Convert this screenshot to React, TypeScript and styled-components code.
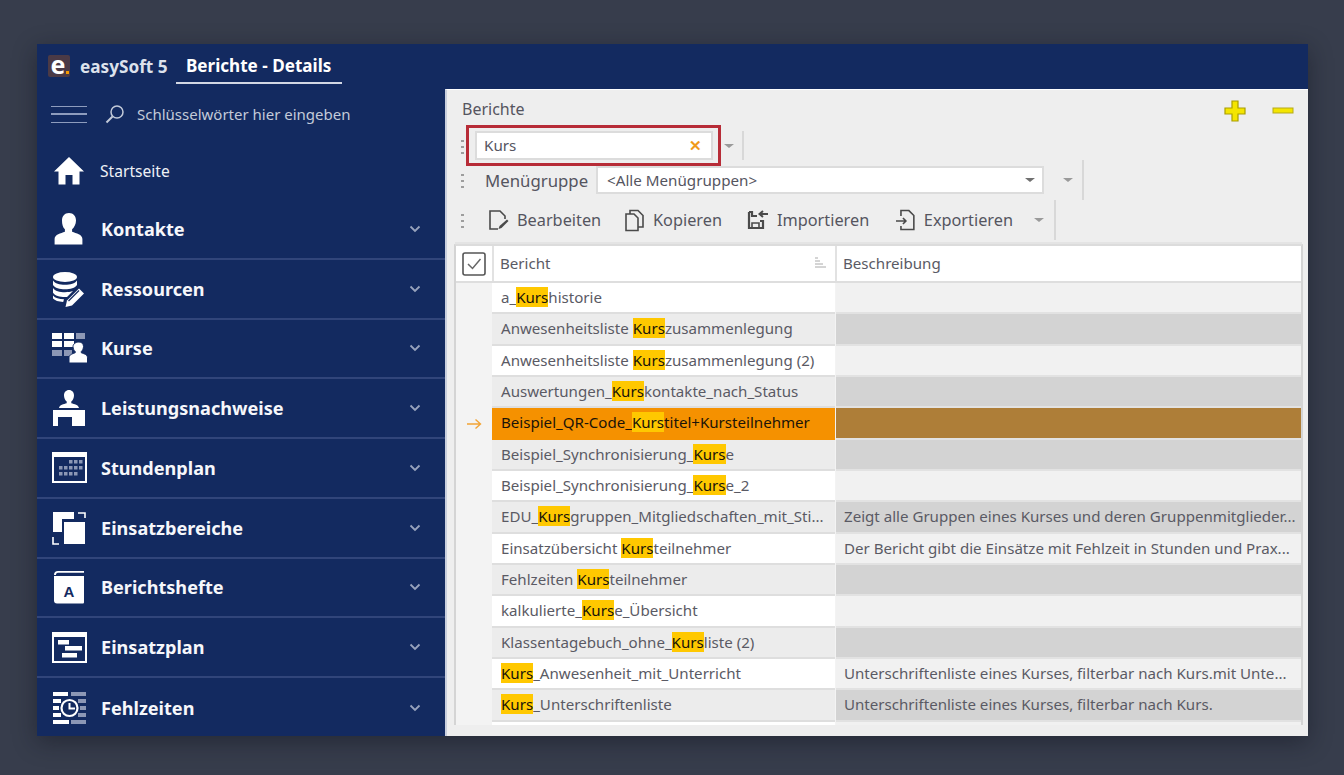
import React from 'react';
import styled, { createGlobalStyle } from 'styled-components';

const GlobalStyle = createGlobalStyle`
  html, body {
    margin: 0;
    height: 775px;
    overflow: hidden;
    background: #373d4c;
    font-family: 'Noto Sans', 'Open Sans', Arial, sans-serif;
  }
  * { box-sizing: border-box; }
`;

const Page = styled.div`
  padding: 44px 36px 0 37px;
`;

const AppWindow = styled.div`
  width: 1271px;
  height: 692px;
  display: flex;
  flex-direction: column;
  background: #132a60;
  box-shadow: 0 6px 22px rgba(15, 18, 28, 0.45);
  overflow: hidden;
`;

const TitleBar = styled.header`
  height: 45px;
  flex: none;
  display: flex;
  align-items: center;
  padding-left: 11px;
`;

const Logo = styled.div`
  width: 22px;
  height: 22px;
  margin-top: -1px;
  border-radius: 2px;
  background: #4b3a46;
  color: #fff;
  font-size: 25px;
  font-weight: 700;
  line-height: 18px;
  text-align: center;
  padding-right: 2px;
  position: relative;
`;

const LogoDot = styled.span`
  position: absolute;
  right: 1px;
  bottom: 3px;
  width: 3px;
  height: 3px;
  background: #f59a00;
`;

const AppName = styled.span`
  margin-left: 10px;
  font-size: 17.2px;
  font-weight: 700;
  color: #dde2ec;
`;

const TabTitle = styled.div`
  align-self: flex-start;
  margin: 4px 0 0 8px;
  width: 166px;
  height: 36px;
  padding-top: 6px;
  border-bottom: 2px solid #d2d7e4;
  text-align: center;
  font-size: 17.1px;
  font-weight: 700;
  color: #fff;
`;

const Body = styled.div`
  flex: 1;
  min-height: 0;
  display: flex;
`;

const Sidebar = styled.nav`
  width: 408px;
  flex: none;
  display: flex;
  flex-direction: column;
`;

const SearchRow = styled.div`
  height: 52px;
  flex: none;
  display: flex;
  align-items: center;
  padding: 0 0 2px 14px;
`;

const Burger = styled.div`
  width: 36px;
  height: 17px;
  border-top: 1.5px solid #8e9cbd;
  border-bottom: 1.5px solid #8e9cbd;
  position: relative;

  &::after {
    content: '';
    position: absolute;
    left: 0;
    right: 0;
    top: 6.5px;
    height: 1.5px;
    background: #8e9cbd;
  }
`;

const SearchHint = styled.span`
  margin-left: 12px;
  font-size: 15px;
  color: #c3cad9;
`;

const HomeRow = styled.a`
  height: 59px;
  flex: none;
  display: flex;
  align-items: center;
  padding: 0 0 0 13px;
  font-size: 15.6px;
  color: #eef1f6;
`;

const NavItem = styled.a`
  height: 59.75px;
  flex: none;
  display: flex;
  align-items: center;
  padding: 0 24px 0 13px;
  border-bottom: 2px solid #31457a;
  font-size: 18.1px;
  font-weight: 700;
  color: #f6f7fb;

  &:last-child {
    border-bottom: 0;
  }
`;

const IconBox = styled.span`
  width: 38px;
  height: 38px;
  flex: none;
  display: flex;
  align-items: center;
  justify-content: center;
  margin-right: 13px;
`;

const HomeIconBox = styled(IconBox)`
  margin-right: 12px;
`;

const NavLabel = styled.span`
  flex: 1;
`;

const Content = styled.main`
  flex: 1;
  min-width: 0;
  display: flex;
  flex-direction: column;
  background: #eeeeee;
  border-left: 2px solid #c9cfdd;
  border-top: 1px solid #fff;
  padding-bottom: 11px;
`;

const TitleRow = styled.div`
  height: 41px;
  flex: none;
  display: flex;
  justify-content: space-between;
  padding: 8px 14px 0 15px;
  font-size: 16px;
  color: #55555f;
`;

const ZoomIcons = styled.div`
  display: flex;
  gap: 26px;
  margin-top: 2px;
`;

const ToolRow = styled.div<{ $height: number }>`
  height: ${(p) => p.$height}px;
  flex: none;
  display: flex;
  align-items: center;
  padding-left: 14px;
  font-size: 16.3px;
  color: #55555f;
`;

const Grip = styled.span`
  width: 3px;
  height: 16px;
  flex: none;
  background: radial-gradient(circle, #9d9d9d 1.2px, transparent 1.4px) 0 0 / 3px 6px;
`;

const FilterBox = styled.div`
  position: relative;
  width: 238px;
  height: 29px;
  margin-left: 11px;
  display: flex;
  align-items: center;
  justify-content: space-between;
  padding: 0 9px 1px 7px;
  background: #fff;
  border: 2px solid #dcdcdc;
  font-size: 15.2px;

  &::after {
    content: '';
    position: absolute;
    inset: -8px -10px -8px -11px;
    border: 3px solid #b72c37;
    pointer-events: none;
  }
`;

const ClearMark = styled.span`
  color: #f09a1a;
  font-size: 15px;
  font-weight: 700;
  line-height: 1;
`;

const Caret = styled.span<{ $left: number }>`
  width: 0;
  height: 0;
  flex: none;
  margin-left: ${(p) => p.$left}px;
  border-left: 5px solid transparent;
  border-right: 5px solid transparent;
  border-top: 4px solid #9a9a9a;
`;

const ToolSep = styled.span<{ $left: number; $height: number }>`
  width: 2px;
  height: ${(p) => p.$height}px;
  flex: none;
  margin-left: ${(p) => p.$left}px;
  background: #d8d8d8;
`;

const GroupLabel = styled.span`
  margin-left: 21px;
  width: 111px;
  flex: none;
  font-size: 16.8px;
`;

const GroupSelect = styled.div`
  width: 448px;
  height: 28px;
  flex: none;
  display: flex;
  align-items: center;
  justify-content: space-between;
  padding: 0 7px 1px 9px;
  background: #fff;
  border: 2px solid #dcdcdc;
  font-size: 15.2px;
`;

const DarkCaret = styled.span`
  width: 0;
  height: 0;
  border-left: 5px solid transparent;
  border-right: 5px solid transparent;
  border-top: 4px solid #707070;
`;

const ActionButton = styled.button<{ $width: number }>`
  width: ${(p) => p.$width}px;
  flex: none;
  display: flex;
  align-items: center;
  gap: 8px;
  padding: 0;
  border: 0;
  background: none;
  font: inherit;
  color: inherit;
`;

const Actions = styled.div`
  display: flex;
  align-items: center;
  margin-left: 24px;
`;

const Table = styled.div`
  flex: 1;
  min-height: 0;
  margin: 4px 5px 0 7px;
  border-top: 2px solid #dcdcdc;
  box-shadow: 0 -3px 0 -1px #e4e4e4;
  border-left: 2px solid #d4d4d4;
  border-right: 2px solid #d4d4d4;
  overflow: hidden;
  background: #f3f3f3;
  font-size: 15.1px;
  color: #5a5a64;
`;

const HeadRow = styled.div`
  display: grid;
  grid-template-columns: 36px 343px 1fr;
  height: 37px;
  background: #fff;
  border-bottom: 2px solid #dedede;
`;

const HeadCell = styled.div`
  display: flex;
  align-items: center;
  justify-content: space-between;
  padding: 0 9px 2px 6px;
  border-left: 2px solid #e2e2e2;
`;

const CheckCell = styled.div`
  display: flex;
  align-items: center;
  justify-content: center;
`;

const Row = styled.div`
  display: grid;
  grid-template-columns: 36px 343px 1fr;
  height: 31.33px;
`;

const Marker = styled.div`
  display: flex;
  align-items: center;
  justify-content: center;
  color: #f2a436;
`;

type Tone = 'white' | 'gray' | 'active';

const nameBg: Record<Tone, string> = { white: '#ffffff', gray: '#ececec', active: '#f59100' };
const descBg: Record<Tone, string> = { white: '#f1f1f1', gray: '#d3d3d3', active: '#ae7e38' };

const NameCell = styled.div<{ $tone: Tone }>`
  display: flex;
  align-items: center;
  padding: 0 8px 1px 9px;
  background: ${(p) => nameBg[p.$tone]};
  color: ${(p) => (p.$tone === 'active' ? '#1b1408' : 'inherit')};
  border-bottom: 2px solid ${(p) => (p.$tone === 'active' ? '#f59100' : '#dedede')};
  white-space: pre;
  overflow: hidden;
`;

const DescCell = styled.div<{ $tone: Tone }>`
  display: flex;
  align-items: center;
  padding: 0 8px 1px;
  margin-left: 1px;
  background: ${(p) => descBg[p.$tone]};
  border-bottom: 2px solid #e2e2e2;
  white-space: nowrap;
  overflow: hidden;
`;

const Hit = styled.span`
  background: #ffc800;
  color: #17130a;
  line-height: 20px;
`;

const Chevron = () => (
  <svg width="12" height="8" viewBox="0 0 12 8">
    <path d="M1.5 1.5 6 6l4.5-4.5" fill="none" stroke="#98a3bd" strokeWidth="1.8" />
  </svg>
);

const icons: Record<string, React.ReactNode> = {
  home: (
    <svg width="32" height="30" viewBox="0 0 32 30" fill="#fff">
      <path d="M16 1 31 15.5h-4.500V28.500h-7V19h-7v9.500h-7V15.500H1z" />
    </svg>
  ),
  kontakte: (
    <svg width="30" height="34" viewBox="0 0 30 34" fill="#fff">
      <path d="M15 1c4.500 0 7 3.300 7 7.500 0 3.600-1.800 7-3.900 8.800v2.400c4 1.500 10.300 2.700 10.300 7.300v5.500H.6v-5.500c0-4.600 6.300-5.800 10.300-7.300v-2.400C8.800 15.500 8 12.100 8 8.500 8 4.300 10.500 1 15 1z" />
    </svg>
  ),
  ressourcen: (
    <svg width="34" height="36" viewBox="0 0 34 36" fill="#fff">
      <ellipse cx="13" cy="6" rx="12" ry="5" />
      <path d="M1 9.500c2 3 6.500 4.200 12 4.200s10-1.200 12-4.200V14c-2 3-6.500 4.200-12 4.200S3 17 1 14z" />
      <path d="M1 17c2 3 6.500 4.200 12 4.200 3 0 5.800-.4 8-1.200l-6 6c-.6.100-1.300.1-2 .1-5.500 0-10-1.500-12-4.400z" />
      <path d="M1 24.500c2 2.500 6 3.700 11 3.800L11.200 31C6.500 30.700 2.800 29.500 1 27.500z" />
      <path d="M27 17.500l5 5L20 34.500l-6.500 1.500 1.500-6.500z" />
      <path d="M27 19.500 16.500 30" stroke="#132a60" strokeWidth="1.2" />
    </svg>
  ),
  kurse: (
    <svg width="37" height="32" viewBox="0 0 37 32">
      <g fill="#fff">
        <rect x="1" y="1" width="10" height="6" />
        <rect x="13" y="1" width="10" height="6" />
        <rect x="1" y="9" width="10" height="6" />
        <rect x="13" y="9" width="10" height="6" />
      </g>
      <g fill="#8c97b5">
        <rect x="25" y="1" width="9" height="6" />
        <rect x="1" y="18" width="10" height="6" />
        <rect x="13" y="18" width="8" height="6" />
      </g>
      <path d="M28 10c2.800 0 4.500 2 4.500 4.500 0 2-1 4-2.200 5v1.300c2.500 1 6.200 1.600 6.200 5V31H18v-5.200c0-3.400 3.700-4 6.200-5v-1.300c-1.300-1-2.200-3-2.200-5C22 12 24.800 10 28 10z" fill="#fff" stroke="#132a60" />
    </svg>
  ),
  leistung: (
    <svg width="34" height="38" viewBox="0 0 34 38" fill="#fff">
      <path d="M17 1c3 0 5 2.300 5 5.500 0 2.500-1.200 4.800-2.700 6v1.700c3 1 7.200 1.400 7.700 4.800H7c.5-3.400 4.700-3.800 7.700-4.800v-1.700C13.200 11.300 12 9 12 6.500 12 3.300 14 1 17 1z" />
      <path d="M1 21h32v16H20v-9H6v9H1z" />
    </svg>
  ),
  stundenplan: (
    <svg width="35" height="31" viewBox="0 0 35 31">
      <rect x="1" y="1" width="33" height="29" fill="none" stroke="#fff" strokeWidth="2" />
      <rect x="1" y="1" width="33" height="4" fill="#fff" />
      <g fill="#8c97b5">
        {[
          [17, 8], [22, 8], [27, 8],
          [7, 14], [12, 14], [17, 14], [22, 14], [27, 14],
          [7, 20], [12, 20], [17, 20], [22, 20]
        ].map(([x, y]) => (
          <rect key={`${x}-${y}`} x={x} y={y} width="3.500" height="3.500" />
        ))}
      </g>
    </svg>
  ),
  bereiche: (
    <svg width="34" height="34" viewBox="0 0 34 34" fill="#fff">
      <path d="M1 1h21v7H10v13H1z" />
      <rect x="12" y="11" width="21" height="22" />
      <path d="M26 2h7v5M1 26v7h6" fill="none" stroke="#fff" strokeWidth="1.600" />
    </svg>
  ),
  hefte: (
    <svg width="32" height="34" viewBox="0 0 32 34">
      <path d="M1 5c0-2.500 1.500-4 4-4h26v1.800H5C3.500 2.800 3 3.800 3 5" fill="#fff" />
      <path d="M1 6h30v26c0 1-.5 1.500-1.500 1.500H4c-2 0-3-1-3-3z" fill="#fff" />
      <text x="16" y="27" textAnchor="middle" fontFamily="Liberation Sans, Arial, sans-serif" fontWeight="700" fontSize="15" fill="#132a60">A</text>
    </svg>
  ),
  plan: (
    <svg width="35" height="31" viewBox="0 0 35 31">
      <rect x="1" y="1" width="33" height="29" fill="none" stroke="#fff" strokeWidth="2" />
      <rect x="1" y="1" width="33" height="4" fill="#fff" />
      <rect x="6" y="8" width="11" height="4.500" fill="#fff" />
      <rect x="13" y="14" width="17" height="4.500" fill="#fff" />
      <rect x="10" y="21" width="15" height="4.500" fill="#fff" />
    </svg>
  ),
  fehlzeiten: (
    <svg width="35" height="34" viewBox="0 0 35 34">
      <g fill="#fff">
        <rect x="1" y="1" width="15" height="4" />
        <rect x="1" y="8" width="8" height="4" />
        <rect x="1" y="15" width="6" height="4" />
        <rect x="1" y="22" width="8" height="4" />
        <rect x="1" y="29" width="16" height="4" />
      </g>
      <g fill="#8c97b5">
        <rect x="19" y="1" width="15" height="4" />
        <rect x="26" y="8" width="8" height="4" />
        <rect x="28" y="15" width="6" height="4" />
        <rect x="26" y="22" width="8" height="4" />
        <rect x="19" y="29" width="15" height="4" />
      </g>
      <circle cx="17.500" cy="17" r="8" fill="none" stroke="#fff" strokeWidth="2.200" />
      <path d="M17.500 12v5.500H23" fill="none" stroke="#fff" strokeWidth="2" />
    </svg>
  )
};

const navItems = [
  ['Kontakte', 'kontakte'],
  ['Ressourcen', 'ressourcen'],
  ['Kurse', 'kurse'],
  ['Leistungsnachweise', 'leistung'],
  ['Stundenplan', 'stundenplan'],
  ['Einsatzbereiche', 'bereiche'],
  ['Berichtshefte', 'hefte'],
  ['Einsatzplan', 'plan'],
  ['Fehlzeiten', 'fehlzeiten']
];

const rows: { pre: string; post: string; desc?: string }[] = [
  { pre: 'a_', post: 'historie' },
  { pre: 'Anwesenheitsliste ', post: 'zusammenlegung' },
  { pre: 'Anwesenheitsliste ', post: 'zusammenlegung (2)' },
  { pre: 'Auswertungen_', post: 'kontakte_nach_Status' },
  { pre: 'Beispiel_QR-Code_', post: 'titel+Kursteilnehmer' },
  { pre: 'Beispiel_Synchronisierung_', post: 'e' },
  { pre: 'Beispiel_Synchronisierung_', post: 'e_2' },
  {
    pre: 'EDU_',
    post: 'gruppen_Mitgliedschaften_mit_Sti...',
    desc: 'Zeigt alle Gruppen eines Kurses und deren Gruppenmitglieder...'
  },
  {
    pre: 'Einsatzübersicht ',
    post: 'teilnehmer',
    desc: 'Der Bericht gibt die Einsätze mit Fehlzeit in Stunden und Prax...'
  },
  { pre: 'Fehlzeiten ', post: 'teilnehmer' },
  { pre: 'kalkulierte_', post: 'e_Übersicht' },
  { pre: 'Klassentagebuch_ohne_', post: 'liste (2)' },
  {
    pre: '',
    post: '_Anwesenheit_mit_Unterricht',
    desc: 'Unterschriftenliste eines Kurses, filterbar nach Kurs.mit Unte...'
  },
  {
    pre: '',
    post: '_Unterschriftenliste',
    desc: 'Unterschriftenliste eines Kurses, filterbar nach Kurs.'
  },
  { pre: '', post: '' }
];

const actionStroke = { fill: 'none', stroke: '#4a4a4a', strokeWidth: 1.6 };

const App = () => {
  return (
    <Page>
      <GlobalStyle />
      <AppWindow>
        <TitleBar>
          <Logo>
            e<LogoDot />
          </Logo>
          <AppName>easySoft 5</AppName>
          <TabTitle>Berichte - Details</TabTitle>
        </TitleBar>
        <Body>
          <Sidebar>
            <SearchRow>
              <Burger />
              <svg width="20" height="20" viewBox="0 0 20 20" style={{ marginLeft: 18 }}>
                <circle cx="12" cy="8" r="6" fill="none" stroke="#c3cad9" strokeWidth="1.500" />
                <path d="M7.500 12.500 1.500 18.500" stroke="#c3cad9" strokeWidth="2" />
              </svg>
              <SearchHint>Schlüsselwörter hier eingeben</SearchHint>
            </SearchRow>
            <HomeRow>
              <HomeIconBox>{icons.home}</HomeIconBox>
              Startseite
            </HomeRow>
            {navItems.map(([label, icon]) => (
              <NavItem key={label}>
                <IconBox>{icons[icon]}</IconBox>
                <NavLabel>{label}</NavLabel>
                <Chevron />
              </NavItem>
            ))}
          </Sidebar>
          <Content>
            <TitleRow>
              Berichte
              <ZoomIcons>
                <svg width="22" height="22" viewBox="0 0 22 22">
                  <path d="M8 1h6v7h7v6h-7v7H8v-7H1V8h7z" fill="#f4e500" stroke="#a99e00" strokeWidth="1.200" />
                </svg>
                <svg width="22" height="22" viewBox="0 0 22 22">
                  <rect x="1" y="8" width="20" height="5" fill="#f4e500" stroke="#b5aa1a" strokeWidth="1" />
                </svg>
              </ZoomIcons>
            </TitleRow>
            <ToolRow $height={29}>
              <Grip />
              <FilterBox>
                Kurs
                <ClearMark>✕</ClearMark>
              </FilterBox>
              <Caret $left={11} />
              <ToolSep $left={8} $height={29} />
            </ToolRow>
            <ToolRow $height={40}>
              <Grip />
              <GroupLabel>Menügruppe</GroupLabel>
              <GroupSelect>
                &lt;Alle Menügruppen&gt;
                <DarkCaret />
              </GroupSelect>
              <Caret $left={19} />
              <ToolSep $left={9} $height={40} />
            </ToolRow>
            <ToolRow $height={40}>
              <Grip />
              <Actions>
                <ActionButton $width={136}>
                  <svg width="21" height="22" viewBox="0 0 21 22">
                    <path d="M10 20H2V2h10l5 5v3" {...actionStroke} />
                    <path d="M19 10.500l1.500 1.500-7 7-3 1 1-3z" fill="#4a4a4a" />
                  </svg>
                  Bearbeiten
                </ActionButton>
                <ActionButton $width={123}>
                  <svg width="21" height="23" viewBox="0 0 21 23">
                    <path d="M6 5V1.500h8l5 5V18h-5" {...actionStroke} />
                    <path d="M2 5h8l4 4v12.500H2z" {...actionStroke} />
                  </svg>
                  Kopieren
                </ActionButton>
                <ActionButton $width={149}>
                  <svg width="22" height="20" viewBox="0 0 22 20">
                    <path d="M2 2v16h14v-7h-3M2 2h3v4h5" {...actionStroke} strokeWidth={2.200} />
                    <path d="M5 18v-5h7v5" {...actionStroke} />
                    <path d="M21 4h-8m3-3-3.500 3L16 7" {...actionStroke} strokeWidth={2} />
                  </svg>
                  Importieren
                </ActionButton>
                <ActionButton $width={117}>
                  <svg width="20" height="22" viewBox="0 0 20 22">
                    <path d="M5 7V1.500h8l5 5v14H5V17" {...actionStroke} />
                    <path d="M0 12h10m-3-3 3 3-3 3" {...actionStroke} />
                  </svg>
                  Exportieren
                </ActionButton>
                <Caret $left={21} />
                <ToolSep $left={10} $height={40} />
              </Actions>
            </ToolRow>
            <Table>
              <HeadRow>
                <CheckCell>
                  <svg width="24" height="24" viewBox="0 0 24 24">
                    <rect x="1" y="1" width="22" height="22" rx="2" fill="#fff" stroke="#555" strokeWidth="1.600" />
                    <path d="M6 12l4.500 4.500L18.500 7" fill="none" stroke="#666" strokeWidth="1.500" />
                  </svg>
                </CheckCell>
                <HeadCell>
                  Bericht
                  <svg width="12" height="11" viewBox="0 0 12 11">
                    <path d="M1 1h3M1 4h5M1 7h8M1 10h11" stroke="#aaa" strokeWidth="1" />
                  </svg>
                </HeadCell>
                <HeadCell>Beschreibung</HeadCell>
              </HeadRow>
              {rows.map((row, i) => {
                const tone: Tone = i === 4 ? 'active' : i % 2 === 0 ? 'white' : 'gray';
                return (
                  <Row key={i}>
                    <Marker>
                      {i === 4 && (
                        <svg width="15" height="12" viewBox="0 0 15 12">
                          <path d="M0 6h13M8.500 1.500 13.500 6l-5 4.500" fill="none" stroke="#f2a436" strokeWidth="1.400" />
                        </svg>
                      )}
                    </Marker>
                    <NameCell $tone={tone}>
                      {row.pre}
                      {(row.pre || row.post) && <Hit>Kurs</Hit>}
                      {row.post}
                    </NameCell>
                    <DescCell $tone={tone}>{row.desc}</DescCell>
                  </Row>
                );
              })}
            </Table>
          </Content>
        </Body>
      </AppWindow>
    </Page>
  );
};

export default App;
